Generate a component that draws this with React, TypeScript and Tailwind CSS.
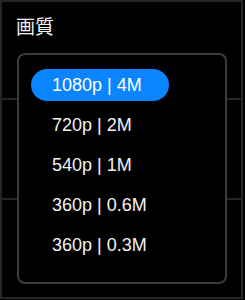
const options = ['1080p | 4M', '720p | 2M', '540p | 1M', '360p | 0.6M', '360p | 0.3M']

export default function App() {
  const selected = 0

  return (
    <div
      className="relative w-[245px] h-[300px] bg-black overflow-hidden"
      style={{ fontFamily: '"Liberation Sans", "Noto Sans CJK JP", sans-serif' }}
    >
      {/* settings rows behind the dropdown */}
      <div className="w-[243px] h-[299px] border-2 border-[#262626] flex flex-col">
        <div className="h-[98px] border-b-2 border-[#262626] pl-[14px] pt-[13px]">
          <h2 className="text-[19px] leading-[26px] text-[#f2f2f2]">画質</h2>
        </div>
        <div className="h-[100px] border-b-2 border-[#262626]" />
        <div className="flex-1" />
      </div>

      {/* dropdown */}
      <div className="absolute left-[17px] top-[53px] w-[210px] h-[231px] rounded-[8px] border-2 border-[#3c3c3c] bg-black pl-[12px] pt-[14px]">
        <ul className="flex flex-col gap-2">
          {options.map((opt, i) => (
            <li
              key={opt}
              className={`w-[138px] h-8 rounded-full pl-[21px] flex items-center text-[18px] text-[#f2f2f2] ${
                i === selected ? 'bg-[#0a84ff] text-white' : ''
              }`}
            >
              {opt}
            </li>
          ))}
        </ul>
      </div>
    </div>
  )
}
